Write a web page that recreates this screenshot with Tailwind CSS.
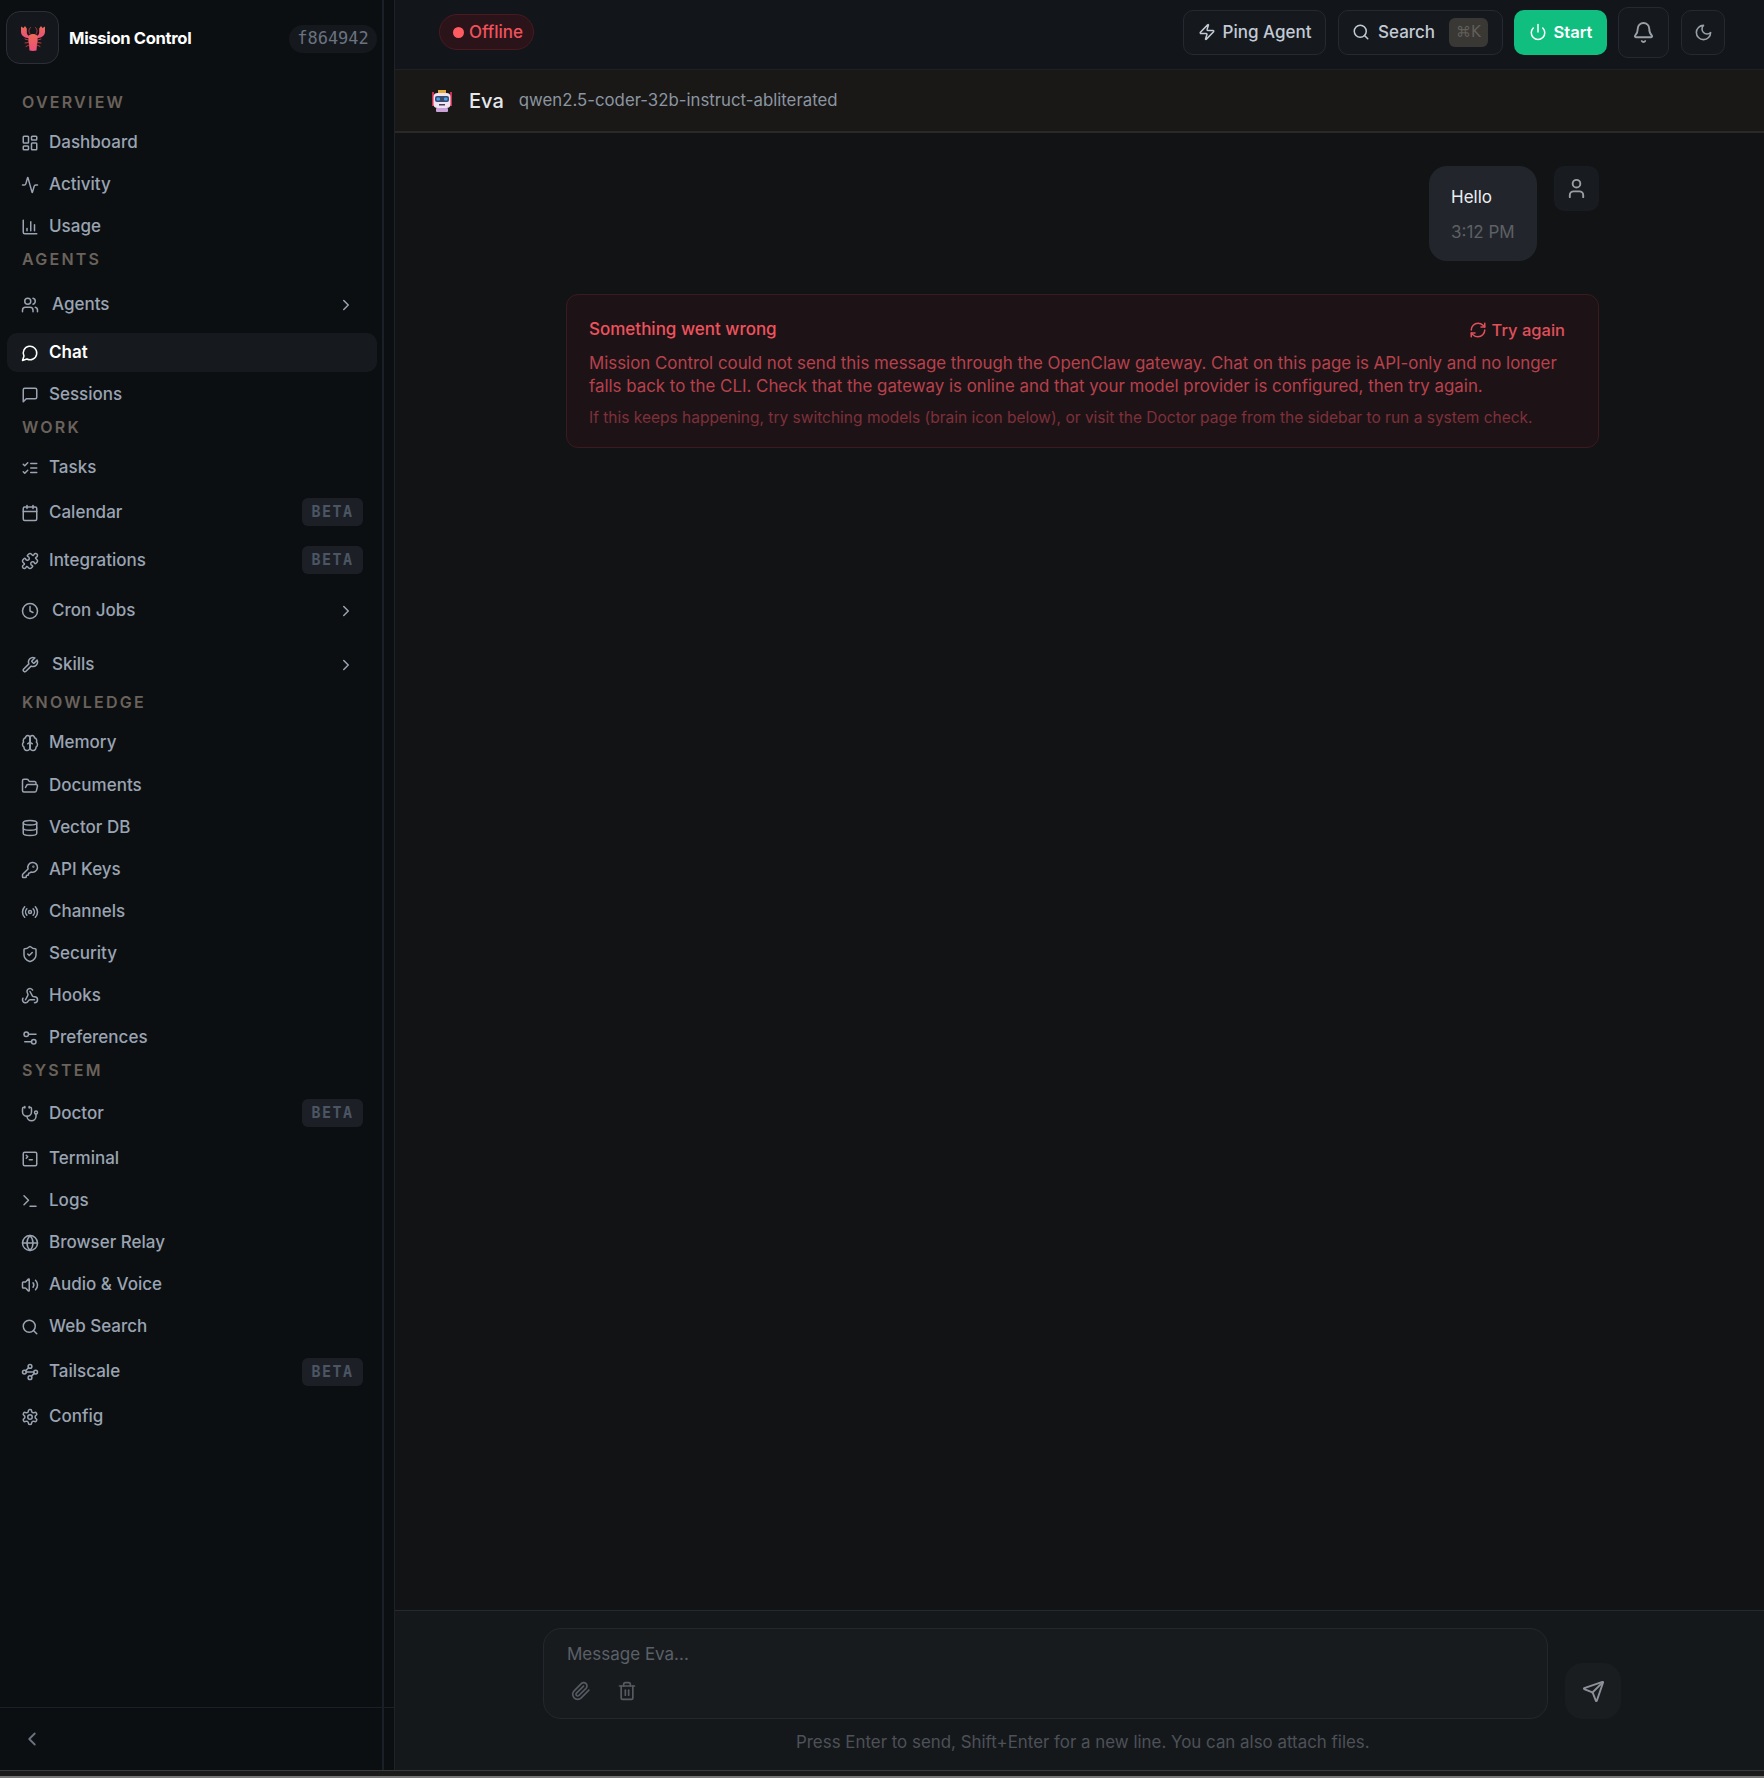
<!doctype html>
<html lang="en">
<head>
<meta charset="utf-8">
<title>Mission Control</title>
<script src="https://cdn.jsdelivr.net/npm/@tailwindcss/browser@4"></script>
</head>
<body class="bg-[#1a1a1a] font-['Inter',sans-serif] overflow-hidden">
<svg class="hidden" xmlns="http://www.w3.org/2000/svg">
<symbol id="dash" viewBox="0 0 24 24"><rect width="7" height="9" x="3" y="3" rx="1"/><rect width="7" height="5" x="14" y="3" rx="1"/><rect width="7" height="9" x="14" y="12" rx="1"/><rect width="7" height="5" x="3" y="16" rx="1"/></symbol>
<symbol id="activity" viewBox="0 0 24 24"><path d="M22 12h-2.48a2 2 0 0 0-1.93 1.46l-2.35 8.36a.25.25 0 0 1-.48 0L9.24 2.18a.25.25 0 0 0-.48 0l-2.35 8.36A2 2 0 0 1 4.49 12H2"/></symbol>
<symbol id="chart" viewBox="0 0 24 24"><path d="M3 3v16a2 2 0 0 0 2 2h16"/><path d="M18 17V9"/><path d="M13 17V5"/><path d="M8 17v-3"/></symbol>
<symbol id="users" viewBox="0 0 24 24"><path d="M16 21v-2a4 4 0 0 0-4-4H6a4 4 0 0 0-4 4v2"/><circle cx="9" cy="7" r="4"/><path d="M22 21v-2a4 4 0 0 0-3-3.87"/><path d="M16 3.13a4 4 0 0 1 0 7.75"/></symbol>
<symbol id="circlemsg" viewBox="0 0 24 24"><path d="M7.9 20A9 9 0 1 0 4 16.1L2 22Z"/></symbol>
<symbol id="squaremsg" viewBox="0 0 24 24"><path d="M21 15a2 2 0 0 1-2 2H7l-4 4V5a2 2 0 0 1 2-2h14a2 2 0 0 1 2 2z"/></symbol>
<symbol id="tasks" viewBox="0 0 24 24"><path d="m3 17 2 2 4-4"/><path d="m3 7 2 2 4-4"/><path d="M13 6h8"/><path d="M13 12h8"/><path d="M13 18h8"/></symbol>
<symbol id="calendar" viewBox="0 0 24 24"><path d="M8 2v4"/><path d="M16 2v4"/><rect width="18" height="18" x="3" y="4" rx="2"/><path d="M3 10h18"/></symbol>
<symbol id="puzzle" viewBox="0 0 24 24"><path d="M19.439 7.85c-.049.322.059.648.289.878l1.568 1.568c.47.47.706 1.087.706 1.704s-.235 1.233-.706 1.704l-1.611 1.611a.98.98 0 0 1-.837.276c-.47-.07-.802-.48-.968-.925a2.501 2.501 0 1 0-3.214 3.214c.446.166.855.497.925.968a.979.979 0 0 1-.276.837l-1.61 1.61a2.404 2.404 0 0 1-1.705.707 2.402 2.402 0 0 1-1.704-.706l-1.568-1.568a1.026 1.026 0 0 0-.877-.29c-.493.074-.84.504-1.02.968a2.5 2.5 0 1 1-3.237-3.237c.464-.18.894-.527.967-1.02a1.026 1.026 0 0 0-.289-.877l-1.568-1.568A2.402 2.402 0 0 1 1.998 12c0-.617.236-1.234.706-1.704L4.23 8.77c.24-.24.581-.353.917-.303.515.077.877.528 1.073 1.01a2.5 2.5 0 1 0 3.259-3.259c-.482-.196-.933-.558-1.01-1.073-.05-.336.062-.676.303-.917l1.525-1.525A2.402 2.402 0 0 1 12 1.998c.617 0 1.234.236 1.704.706l1.568 1.568c.23.23.556.338.877.29.493-.074.84-.504 1.02-.968a2.5 2.5 0 1 1 3.237 3.237c-.464.18-.894.527-.967 1.02Z"/></symbol>
<symbol id="clock" viewBox="0 0 24 24"><circle cx="12" cy="12" r="10"/><polyline points="12 6 12 12 16 14"/></symbol>
<symbol id="wrench" viewBox="0 0 24 24"><path d="M14.7 6.3a1 1 0 0 0 0 1.4l1.6 1.6a1 1 0 0 0 1.4 0l3.77-3.77a6 6 0 0 1-7.94 7.94l-6.91 6.91a2.12 2.12 0 0 1-3-3l6.91-6.91a6 6 0 0 1 7.94-7.94l-3.76 3.76z"/></symbol>
<symbol id="right" viewBox="0 0 24 24"><path d="m9 18 6-6-6-6"/></symbol>
<symbol id="left" viewBox="0 0 24 24"><path d="m15 18-6-6 6-6"/></symbol>
<symbol id="brain" viewBox="0 0 24 24"><path d="M12 5a3 3 0 1 0-5.997.125 4 4 0 0 0-2.526 5.77 4 4 0 0 0 .556 6.588A4 4 0 1 0 12 18Z"/><path d="M12 5a3 3 0 1 1 5.997.125 4 4 0 0 1 2.526 5.77 4 4 0 0 1-.556 6.588A4 4 0 1 1 12 18Z"/><path d="M15 13a4.5 4.5 0 0 1-3-4 4.5 4.5 0 0 1-3 4"/><path d="M12 5v13"/></symbol>
<symbol id="folder" viewBox="0 0 24 24"><path d="m6 14 1.5-2.9A2 2 0 0 1 9.24 10H20a2 2 0 0 1 1.94 2.5l-1.54 6a2 2 0 0 1-1.95 1.5H4a2 2 0 0 1-2-2V5a2 2 0 0 1 2-2h3.9a2 2 0 0 1 1.69.9l.81 1.2a2 2 0 0 0 1.67.9H18a2 2 0 0 1 2 2v2"/></symbol>
<symbol id="db" viewBox="0 0 24 24"><ellipse cx="12" cy="5" rx="9" ry="3"/><path d="M3 5V19A9 3 0 0 0 21 19V5"/><path d="M3 12A9 3 0 0 0 21 12"/></symbol>
<symbol id="key" viewBox="0 0 24 24"><path d="M2.586 17.414A2 2 0 0 0 2 18.828V21a1 1 0 0 0 1 1h3a1 1 0 0 0 1-1v-1a1 1 0 0 1 1-1h1a1 1 0 0 0 1-1v-1a1 1 0 0 1 1-1h.172a2 2 0 0 0 1.414-.586l.814-.814a6.5 6.5 0 1 0-4-4z"/><circle cx="16.5" cy="7.5" r=".5"/></symbol>
<symbol id="radio" viewBox="0 0 24 24"><path d="M4.9 19.1C1 15.2 1 8.8 4.9 4.9"/><path d="M7.8 16.2c-2.3-2.3-2.3-6.1 0-8.5"/><circle cx="12" cy="12" r="2"/><path d="M16.2 7.8c2.3 2.3 2.3 6.1 0 8.5"/><path d="M19.1 4.9C23 8.8 23 15.1 19.1 19"/></symbol>
<symbol id="shield" viewBox="0 0 24 24"><path d="M20 13c0 5-3.5 7.5-7.66 8.95a1 1 0 0 1-.67-.01C7.5 20.5 4 18 4 13V6a1 1 0 0 1 1-1c2 0 4.5-1.2 6.24-2.72a1.17 1.17 0 0 1 1.52 0C14.51 3.81 17 5 19 5a1 1 0 0 1 1 1z"/><path d="m9 12 2 2 4-4"/></symbol>
<symbol id="webhook" viewBox="0 0 24 24"><path d="M18 16.98h-5.99c-1.1 0-1.95.94-2.48 1.9A4 4 0 0 1 2 17c.01-.7.2-1.4.57-2"/><path d="m6 17 3.13-5.78c.53-.97.1-2.18-.5-3.1a4 4 0 1 1 6.89-4.06"/><path d="m12 6 3.13 5.73C15.66 12.7 16.9 13 18 13a4 4 0 0 1 0 8"/></symbol>
<symbol id="prefs" viewBox="0 0 24 24"><path d="M20 7h-9"/><path d="M14 17H5"/><circle cx="17" cy="17" r="3"/><circle cx="7" cy="7" r="3"/></symbol>
<symbol id="steth" viewBox="0 0 24 24"><path d="M11 2v2"/><path d="M5 2v2"/><path d="M5 3H4a2 2 0 0 0-2 2v4a6 6 0 0 0 12 0V5a2 2 0 0 0-2-2h-1"/><path d="M8 15a6 6 0 0 0 12 0v-3"/><circle cx="20" cy="10" r="2"/></symbol>
<symbol id="squareterm" viewBox="0 0 24 24"><path d="m7 11 2-2-2-2"/><path d="M11 13h4"/><rect width="18" height="18" x="3" y="3" rx="2"/></symbol>
<symbol id="term" viewBox="0 0 24 24"><polyline points="4 17 10 11 4 5"/><line x1="12" x2="20" y1="19" y2="19"/></symbol>
<symbol id="globe" viewBox="0 0 24 24"><circle cx="12" cy="12" r="10"/><path d="M12 2a14.5 14.5 0 0 0 0 20 14.5 14.5 0 0 0 0-20"/><path d="M2 12h20"/></symbol>
<symbol id="volume" viewBox="0 0 24 24"><path d="M11 4.702a.705.705 0 0 0-1.203-.498L6.413 7.587A1.4 1.4 0 0 1 5.416 8H3a1 1 0 0 0-1 1v6a1 1 0 0 0 1 1h2.416a1.4 1.4 0 0 1 .997.413l3.383 3.384A.705.705 0 0 0 11 19.298z"/><path d="M16 9a5 5 0 0 1 0 6"/><path d="M19.364 18.364a9 9 0 0 0 0-12.728"/></symbol>
<symbol id="search" viewBox="0 0 24 24"><path d="m21 21-4.34-4.34"/><circle cx="11" cy="11" r="8"/></symbol>
<symbol id="waypoints" viewBox="0 0 24 24"><circle cx="12" cy="4.5" r="2.5"/><path d="m10.2 6.3-3.9 3.9"/><circle cx="4.5" cy="12" r="2.5"/><path d="M7 12h10"/><circle cx="19.5" cy="12" r="2.5"/><path d="m13.8 17.7 3.9-3.9"/><circle cx="12" cy="19.5" r="2.5"/></symbol>
<symbol id="settings" viewBox="0 0 24 24"><path d="M12.22 2h-.44a2 2 0 0 0-2 2v.18a2 2 0 0 1-1 1.73l-.43.25a2 2 0 0 1-2 0l-.15-.08a2 2 0 0 0-2.73.73l-.22.38a2 2 0 0 0 .73 2.73l.15.1a2 2 0 0 1 1 1.72v.51a2 2 0 0 1-1 1.74l-.15.09a2 2 0 0 0-.73 2.73l.22.38a2 2 0 0 0 2.73.73l.15-.08a2 2 0 0 1 2 0l.43.25a2 2 0 0 1 1 1.73V20a2 2 0 0 0 2 2h.44a2 2 0 0 0 2-2v-.18a2 2 0 0 1 1-1.73l.43-.25a2 2 0 0 1 2 0l.15.08a2 2 0 0 0 2.73-.73l.22-.39a2 2 0 0 0-.73-2.73l-.15-.08a2 2 0 0 1-1-1.74v-.5a2 2 0 0 1 1-1.74l.15-.09a2 2 0 0 0 .73-2.73l-.22-.38a2 2 0 0 0-2.73-.73l-.15.08a2 2 0 0 1-2 0l-.43-.25a2 2 0 0 1-1-1.73V4a2 2 0 0 0-2-2z"/><circle cx="12" cy="12" r="3"/></symbol>
<symbol id="zap" viewBox="0 0 24 24"><path d="M4 14a1 1 0 0 1-.78-1.63l9.9-10.2a.5.5 0 0 1 .86.46l-1.92 6.02A1 1 0 0 0 13 10h7a1 1 0 0 1 .78 1.63l-9.9 10.2a.5.5 0 0 1-.86-.46l1.92-6.02A1 1 0 0 0 11 14z"/></symbol>
<symbol id="power" viewBox="0 0 24 24"><path d="M12 2v10"/><path d="M18.4 6.6a9 9 0 1 1-12.77.04"/></symbol>
<symbol id="bell" viewBox="0 0 24 24"><path d="M10.268 21a2 2 0 0 0 3.464 0"/><path d="M3.262 15.326A1 1 0 0 0 4 17h16a1 1 0 0 0 .74-1.673C19.41 13.956 18 12.499 18 8A6 6 0 0 0 6 8c0 4.499-1.411 5.956-2.738 7.326"/></symbol>
<symbol id="moon" viewBox="0 0 24 24"><path d="M12 3a6 6 0 0 0 9 9 9 9 0 1 1-9-9Z"/></symbol>
<symbol id="user" viewBox="0 0 24 24"><path d="M19 21v-2a4 4 0 0 0-4-4H9a4 4 0 0 0-4 4v2"/><circle cx="12" cy="7" r="4"/></symbol>
<symbol id="refresh" viewBox="0 0 24 24"><path d="M3 12a9 9 0 0 1 9-9 9.75 9.75 0 0 1 6.74 2.74L21 8"/><path d="M21 3v5h-5"/><path d="M21 12a9 9 0 0 1-9 9 9.75 9.75 0 0 1-6.74-2.74L3 16"/><path d="M8 16H3v5"/></symbol>
<symbol id="clip" viewBox="0 0 24 24"><path d="m21.44 11.05-9.19 9.19a6 6 0 0 1-8.49-8.49l8.57-8.57A4 4 0 1 1 18 8.84l-8.59 8.57a2 2 0 0 1-2.83-2.83l8.49-8.48"/></symbol>
<symbol id="trash" viewBox="0 0 24 24"><path d="M3 6h18"/><path d="M19 6v14c0 1-1 2-2 2H7c-1 0-2-1-2-2V6"/><path d="M8 6V4c0-1 1-2 2-2h4c1 0 2 1 2 2v2"/><line x1="10" x2="10" y1="11" y2="17"/><line x1="14" x2="14" y1="11" y2="17"/></symbol>
<symbol id="send" viewBox="0 0 24 24"><path d="M14.536 21.686a.5.5 0 0 0 .937-.024l6.5-19a.496.496 0 0 0-.635-.635l-19 6.5a.5.5 0 0 0-.024.937l7.93 3.18a2 2 0 0 1 1.112 1.11z"/><path d="m21.854 2.147-10.94 10.939"/></symbol>
</svg>

<div class="flex h-[1770px] border-b border-[#3a3a3a] box-content">
  <!-- Sidebar -->
  <aside class="relative w-[394px] shrink-0 flex flex-col bg-[#0c0f12] text-[17px] font-medium text-[#9aa4b2]">
    <div class="absolute top-0 bottom-0 left-[382px] w-[2px] bg-[#1a2027]"></div>
    <div class="flex items-center h-[75px] w-[382px] pl-[6px] pr-[5px] shrink-0">
      <div class="w-[53px] h-[53px] rounded-[14px] border border-[#2b3038] bg-[#14171b] flex items-center justify-center shrink-0">
        <svg class="w-[26px] h-[26px]" viewBox="0 0 26 26"><defs><linearGradient id="lob" x1="0" y1="0" x2="0" y2="1"><stop offset="0" stop-color="#ec6a55"/><stop offset="1" stop-color="#ec4f7c"/></linearGradient></defs>
          <path fill="url(#lob)" d="M1 1.500 3.500 3 5 1l1.800 2.500V7.500C6.800 9.500 8 10.500 9.500 11L9 13C5 13 1.300 11 1 7z"/>
          <path fill="url(#lob)" d="M25 1.500 22.500 3 21 1l-1.800 2.500V7.500C19.200 9.500 18 10.500 16.500 11L17 13C21 13 24.700 11 25 7z"/>
          <path fill="url(#lob)" d="M9 10.500C10.500 8.500 15.500 8.500 17 10.500 18 13 18 16.500 17 19.500L16.500 25.500C14.500 26 11.500 26 9.500 25.500L9 19.500C8 16.500 8 13 9 10.500z"/>
          <path fill="none" stroke="#b83a3f" stroke-width="1" stroke-linecap="round" d="M10 9C8.500 7 8.500 4 10.500 2.500M16 9C17.500 7 17.500 4 15.500 2.500M8.500 15 5 14M8.500 17.500 5 18M9 20 6 21.500M17.500 15 21 14M17.500 17.500 21 18M17 20 20 21.500"/></svg>
      </div>
      <span class="ml-[10px] translate-y-px font-bold text-[16.6px] tracking-[-0.02em] text-white">Mission Control</span>
      <span class="ml-auto h-[28px] w-[88px] translate-y-px flex items-center justify-center rounded-full bg-[#15191d] font-['DejaVu_Sans_Mono',monospace] font-normal text-[17px] text-[#6b7280]">f864942</span>
    </div>
    <nav class="flex-1 w-[382px]">
      <div class="flex items-center h-[26px] mt-[15px] mb-[5px] pl-[22px] pb-[2px] text-[16px] font-semibold tracking-[0.14em] text-[#6a625b]">OVERVIEW</div>
      <a class="flex items-center h-[42px] pt-[2px] pl-[21px]"><svg class="w-[18px] h-[18px] mr-[10px] shrink-0" fill="none" stroke="currentColor" stroke-width="2" stroke-linecap="round" stroke-linejoin="round"><use href="#dash"/></svg>Dashboard</a>
      <a class="flex items-center h-[42px] pt-[2px] pl-[21px]"><svg class="w-[18px] h-[18px] mr-[10px] shrink-0" fill="none" stroke="currentColor" stroke-width="2" stroke-linecap="round" stroke-linejoin="round"><use href="#activity"/></svg>Activity</a>
      <a class="flex items-center h-[42px] pt-[2px] pl-[21px]"><svg class="w-[18px] h-[18px] mr-[10px] shrink-0" fill="none" stroke="currentColor" stroke-width="2" stroke-linecap="round" stroke-linejoin="round"><use href="#chart"/></svg>Usage</a>
      <div class="flex items-center h-[26px] mb-[7px] pl-[22px] pb-[2px] text-[16px] font-semibold tracking-[0.14em] text-[#6a625b]">AGENTS</div>
      <a class="flex items-center h-[48px] pt-[2px] pl-[21px] pr-[27px] mb-[5px]"><svg class="w-[18px] h-[18px] mr-[13px] shrink-0" fill="none" stroke="currentColor" stroke-width="2" stroke-linecap="round" stroke-linejoin="round"><use href="#users"/></svg>Agents<svg class="w-[18px] h-[18px] ml-auto" fill="none" stroke="currentColor" stroke-width="2" stroke-linecap="round" stroke-linejoin="round"><use href="#right"/></svg></a>
      <a class="flex items-center h-[39px] ml-[7px] mr-[5px] pl-[14px] rounded-[10px] bg-[#16191d] text-white font-semibold mb-[1px]"><svg class="w-[18px] h-[18px] mr-[10px] shrink-0" fill="none" stroke="currentColor" stroke-width="2" stroke-linecap="round" stroke-linejoin="round"><use href="#circlemsg"/></svg>Chat</a>
      <a class="flex items-center h-[42px] pt-[2px] pl-[21px]"><svg class="w-[18px] h-[18px] mr-[10px] shrink-0" fill="none" stroke="currentColor" stroke-width="2" stroke-linecap="round" stroke-linejoin="round"><use href="#squaremsg"/></svg>Sessions</a>
      <div class="flex items-center h-[26px] mb-[5px] pl-[22px] pb-[2px] text-[16px] font-semibold tracking-[0.14em] text-[#6a625b]">WORK</div>
      <a class="flex items-center h-[42px] pt-[2px] pl-[21px]"><svg class="w-[18px] h-[18px] mr-[10px] shrink-0" fill="none" stroke="currentColor" stroke-width="2" stroke-linecap="round" stroke-linejoin="round"><use href="#tasks"/></svg>Tasks</a>
      <a class="flex items-center h-[48px] pt-[2px] pl-[21px] pr-[19px]"><svg class="w-[18px] h-[18px] mr-[10px] shrink-0" fill="none" stroke="currentColor" stroke-width="2" stroke-linecap="round" stroke-linejoin="round"><use href="#calendar"/></svg>Calendar<span class="ml-auto -translate-y-px w-[61px] h-[28px] flex items-center justify-center rounded-[6px] bg-[#1c2026] font-['DejaVu_Sans_Mono',monospace] font-bold text-[15px] tracking-[0.1em] text-[#4b5563]">BETA</span></a>
      <a class="flex items-center h-[48px] pt-[2px] pl-[21px] pr-[19px]"><svg class="w-[18px] h-[18px] mr-[10px] shrink-0" fill="none" stroke="currentColor" stroke-width="2" stroke-linecap="round" stroke-linejoin="round"><use href="#puzzle"/></svg>Integrations<span class="ml-auto -translate-y-px w-[61px] h-[28px] flex items-center justify-center rounded-[6px] bg-[#1c2026] font-['DejaVu_Sans_Mono',monospace] font-bold text-[15px] tracking-[0.1em] text-[#4b5563]">BETA</span></a>
      <a class="flex items-center h-[52px] pt-[2px] pl-[21px] pr-[27px] mb-[2px]"><svg class="w-[18px] h-[18px] mr-[13px] shrink-0" fill="none" stroke="currentColor" stroke-width="2" stroke-linecap="round" stroke-linejoin="round"><use href="#clock"/></svg>Cron Jobs<svg class="w-[18px] h-[18px] ml-auto" fill="none" stroke="currentColor" stroke-width="2" stroke-linecap="round" stroke-linejoin="round"><use href="#right"/></svg></a>
      <a class="flex items-center h-[52px] pt-[2px] pl-[21px] pr-[27px]"><svg class="w-[18px] h-[18px] mr-[13px] shrink-0" fill="none" stroke="currentColor" stroke-width="2" stroke-linecap="round" stroke-linejoin="round"><use href="#wrench"/></svg>Skills<svg class="w-[18px] h-[18px] ml-auto" fill="none" stroke="currentColor" stroke-width="2" stroke-linecap="round" stroke-linejoin="round"><use href="#right"/></svg></a>
      <div class="flex items-center h-[26px] mb-[5px] pl-[22px] pb-[2px] text-[16px] font-semibold tracking-[0.14em] text-[#6a625b]">KNOWLEDGE</div>
      <a class="flex items-center h-[43px] pl-[21px]"><svg class="w-[18px] h-[18px] mr-[10px] shrink-0" fill="none" stroke="currentColor" stroke-width="2" stroke-linecap="round" stroke-linejoin="round"><use href="#brain"/></svg>Memory</a>
      <a class="flex items-center h-[42px] pt-[2px] pl-[21px]"><svg class="w-[18px] h-[18px] mr-[10px] shrink-0" fill="none" stroke="currentColor" stroke-width="2" stroke-linecap="round" stroke-linejoin="round"><use href="#folder"/></svg>Documents</a>
      <a class="flex items-center h-[42px] pt-[2px] pl-[21px]"><svg class="w-[18px] h-[18px] mr-[10px] shrink-0" fill="none" stroke="currentColor" stroke-width="2" stroke-linecap="round" stroke-linejoin="round"><use href="#db"/></svg>Vector DB</a>
      <a class="flex items-center h-[42px] pt-[2px] pl-[21px]"><svg class="w-[18px] h-[18px] mr-[10px] shrink-0" fill="none" stroke="currentColor" stroke-width="2" stroke-linecap="round" stroke-linejoin="round"><use href="#key"/></svg>API Keys</a>
      <a class="flex items-center h-[42px] pt-[2px] pl-[21px]"><svg class="w-[18px] h-[18px] mr-[10px] shrink-0" fill="none" stroke="currentColor" stroke-width="2" stroke-linecap="round" stroke-linejoin="round"><use href="#radio"/></svg>Channels</a>
      <a class="flex items-center h-[42px] pt-[2px] pl-[21px]"><svg class="w-[18px] h-[18px] mr-[10px] shrink-0" fill="none" stroke="currentColor" stroke-width="2" stroke-linecap="round" stroke-linejoin="round"><use href="#shield"/></svg>Security</a>
      <a class="flex items-center h-[42px] pt-[2px] pl-[21px]"><svg class="w-[18px] h-[18px] mr-[10px] shrink-0" fill="none" stroke="currentColor" stroke-width="2" stroke-linecap="round" stroke-linejoin="round"><use href="#webhook"/></svg>Hooks</a>
      <a class="flex items-center h-[42px] pt-[2px] pl-[21px]"><svg class="w-[18px] h-[18px] mr-[10px] shrink-0" fill="none" stroke="currentColor" stroke-width="2" stroke-linecap="round" stroke-linejoin="round"><use href="#prefs"/></svg>Preferences</a>
      <div class="flex items-center h-[26px] mb-[5px] pl-[22px] pb-[2px] text-[16px] font-semibold tracking-[0.14em] text-[#6a625b]">SYSTEM</div>
      <a class="flex items-center h-[48px] pt-[2px] pl-[21px] pr-[19px]"><svg class="w-[18px] h-[18px] mr-[10px] shrink-0" fill="none" stroke="currentColor" stroke-width="2" stroke-linecap="round" stroke-linejoin="round"><use href="#steth"/></svg>Doctor<span class="ml-auto -translate-y-px w-[61px] h-[28px] flex items-center justify-center rounded-[6px] bg-[#1c2026] font-['DejaVu_Sans_Mono',monospace] font-bold text-[15px] tracking-[0.1em] text-[#4b5563]">BETA</span></a>
      <a class="flex items-center h-[42px] pt-[2px] pl-[21px]"><svg class="w-[18px] h-[18px] mr-[10px] shrink-0" fill="none" stroke="currentColor" stroke-width="2" stroke-linecap="round" stroke-linejoin="round"><use href="#squareterm"/></svg>Terminal</a>
      <a class="flex items-center h-[42px] pt-[2px] pl-[21px]"><svg class="w-[18px] h-[18px] mr-[10px] shrink-0" fill="none" stroke="currentColor" stroke-width="2" stroke-linecap="round" stroke-linejoin="round"><use href="#term"/></svg>Logs</a>
      <a class="flex items-center h-[42px] pt-[2px] pl-[21px]"><svg class="w-[18px] h-[18px] mr-[10px] shrink-0" fill="none" stroke="currentColor" stroke-width="2" stroke-linecap="round" stroke-linejoin="round"><use href="#globe"/></svg>Browser Relay</a>
      <a class="flex items-center h-[42px] pt-[2px] pl-[21px]"><svg class="w-[18px] h-[18px] mr-[10px] shrink-0" fill="none" stroke="currentColor" stroke-width="2" stroke-linecap="round" stroke-linejoin="round"><use href="#volume"/></svg>Audio &amp; Voice</a>
      <a class="flex items-center h-[42px] pt-[2px] pl-[21px]"><svg class="w-[18px] h-[18px] mr-[10px] shrink-0" fill="none" stroke="currentColor" stroke-width="2" stroke-linecap="round" stroke-linejoin="round"><use href="#search"/></svg>Web Search</a>
      <a class="flex items-center h-[48px] pt-[2px] pl-[21px] pr-[19px]"><svg class="w-[18px] h-[18px] mr-[10px] shrink-0" fill="none" stroke="currentColor" stroke-width="2" stroke-linecap="round" stroke-linejoin="round"><use href="#waypoints"/></svg>Tailscale<span class="ml-auto w-[61px] h-[28px] flex items-center justify-center rounded-[6px] bg-[#1c2026] font-['DejaVu_Sans_Mono',monospace] font-bold text-[15px] tracking-[0.1em] text-[#4b5563]">BETA</span></a>
      <a class="flex items-center h-[42px] pt-[2px] pl-[21px]"><svg class="w-[18px] h-[18px] mr-[10px] shrink-0" fill="none" stroke="currentColor" stroke-width="2" stroke-linecap="round" stroke-linejoin="round"><use href="#settings"/></svg>Config</a>
    </nav>
    <div class="h-[63px] border-t border-[#1a2027] flex items-center pl-[21px] text-[#6b7280] shrink-0">
      <svg class="w-[22px] h-[22px]" fill="none" stroke="currentColor" stroke-width="2" stroke-linecap="round" stroke-linejoin="round"><use href="#left"/></svg>
    </div>
  </aside>

  <!-- Main -->
  <main class="flex-1 min-w-0 flex flex-col border-l border-[#1e2329] bg-[#111315]">
    <header class="h-[70px] shrink-0 flex items-center pl-[44px] pr-[39px] pb-[5px] border-b border-[#1e2227] bg-[#12151a] font-medium text-[17px]">
      <span class="h-[36px] w-[95px] pl-[13px] flex items-center gap-[5px] rounded-full border border-[#4a1a20] bg-[#2a1419] text-[#f0525c]"><span class="w-[11px] h-[11px] rounded-full bg-[#ff5c62]"></span><span class="translate-y-px">Offline</span></span>
      <div class="ml-auto flex items-center gap-[11px] text-[#c3cad6]">
        <button class="h-[45px] w-[143px] flex items-center justify-center gap-[7px] rounded-[10px] border border-[#252a31] bg-[#15191d]"><svg class="w-[18px] h-[18px]" fill="none" stroke="currentColor" stroke-width="2" stroke-linecap="round" stroke-linejoin="round"><use href="#zap"/></svg><span class="translate-y-px">Ping Agent</span></button>
        <button class="ml-px h-[45px] w-[165px] flex items-center pl-[13px] rounded-[10px] border border-[#252a31] bg-[#15191d]"><svg class="w-[18px] h-[18px] mr-[8px]" fill="none" stroke="currentColor" stroke-width="2" stroke-linecap="round" stroke-linejoin="round"><use href="#search"/></svg><span class="translate-y-px">Search</span><span class="ml-auto mr-[14px] w-[39px] h-[29px] flex items-center justify-center rounded-[6px] bg-[#3a3835] text-[#625e59] text-[15px] font-['DejaVu_Sans',sans-serif] font-normal">⌘K</span></button>
        <button class="h-[45px] w-[93px] flex items-center justify-center gap-[7px] rounded-[10px] bg-[#10bf80] text-white font-semibold text-[16.5px]"><svg class="w-[18px] h-[18px]" fill="none" stroke="currentColor" stroke-width="2" stroke-linecap="round" stroke-linejoin="round"><use href="#power"/></svg>Start</button>
        <button class="h-[51px] w-[51px] flex items-center justify-center rounded-[10px] border border-[#252a31] bg-[#15191d] text-[#9aa0a8]"><svg class="w-[23px] h-[23px]" fill="none" stroke="currentColor" stroke-width="2" stroke-linecap="round" stroke-linejoin="round"><use href="#bell"/></svg></button>
        <button class="ml-px h-[45px] w-[44px] flex items-center justify-center rounded-[10px] border border-[#252a31] bg-[#15191d] text-[#9aa0a8]"><svg class="w-[19px] h-[19px]" fill="none" stroke="currentColor" stroke-width="2" stroke-linecap="round" stroke-linejoin="round"><use href="#moon"/></svg></button>
      </div>
    </header>

    <div class="h-[63px] shrink-0 flex items-center pl-[36px] border-b-2 border-[#2a2927] bg-[#1a1816]">
      <svg class="w-[22px] h-[22px] shrink-0" viewBox="0 0 22 22">
        <path fill="#c9304f" d="M1 2h2v14H1zM19 2h2v14h-2z"/>
        <path fill="#e0a93f" d="M7 0h8v3H7z"/>
        <rect x="2.500" y="3" width="17" height="15" rx="4" fill="#efe3f2"/>
        <rect x="4" y="6" width="14" height="6" rx="2" fill="#3a4a6e"/>
        <rect x="5.500" y="7.500" width="3.500" height="3" rx="1" fill="#4aa3e8"/><rect x="13" y="7.500" width="3.500" height="3" rx="1" fill="#4aa3e8"/>
        <rect x="8" y="14" width="6" height="1.500" fill="#4a3a5a"/>
        <rect x="5" y="18" width="12" height="4" rx="1" fill="#c9a3d8"/>
      </svg>
      <span class="ml-[16px] text-[20px] font-medium text-[#e5e7eb]">Eva</span>
      <span class="ml-[15px] text-[16.8px] text-[#8b95a1]">qwen2.5-coder-32b-instruct-abliterated</span>
    </div>

    <section class="flex-1 min-h-0 pt-[33px] pl-[171px] pr-[165px]">
      <div class="flex justify-end items-start gap-[17px]">
        <div class="w-[108px] h-[95px] rounded-[18px] bg-[#22262c] pl-[22px] pt-[19px] text-[17px]">
          <div class="text-[#eceef1] leading-[25px]">Hello</div>
          <div class="mt-[10px] text-[#5d6064] leading-[25px]">3:12 PM</div>
        </div>
        <div class="w-[45px] h-[45px] rounded-[10px] bg-[#181b1f] flex items-center justify-center text-[#9b9fa5]"><svg class="w-[23px] h-[23px]" fill="none" stroke="currentColor" stroke-width="2" stroke-linecap="round" stroke-linejoin="round"><use href="#user"/></svg></div>
      </div>
      <div class="mt-[33px] h-[154px] rounded-[12px] border border-[#3c1a1f] bg-[#1d1317] pl-[22px] pr-[33px] pt-[22px]">
        <div class="flex items-center justify-between h-[26px] text-[17px] font-medium text-[#f0525c]">
          <span>Something went wrong</span>
          <span class="flex items-center gap-[5px] text-[16.5px] text-[#e0505a]"><svg class="w-[18px] h-[18px]" fill="none" stroke="currentColor" stroke-width="2" stroke-linecap="round" stroke-linejoin="round"><use href="#refresh"/></svg>Try again</span>
        </div>
        <p class="mt-[9px] text-[16.86px] leading-[23px] text-[#b8414c]">Mission Control could not send this message through the OpenClaw gateway. Chat on this page is API-only and no longer falls back to the CLI. Check that the gateway is online and that your model provider is configured, then try again.</p>
        <p class="mt-[8px] text-[15.5px] leading-[23px] text-[#7f3039]">If this keeps happening, try switching models (brain icon below), or visit the Doctor page from the sidebar to run a system check.</p>
      </div>
    </section>

    <footer class="h-[160px] shrink-0 border-t border-[#26292d] bg-[#15181b] pl-[148px]">
      <div class="flex items-end mt-[17px] gap-[17px]">
        <div class="w-[1005px] h-[91px] rounded-[18px] border border-[#24282d] bg-[#181b1e] pl-[23px] pt-[13px]">
          <div class="text-[17px] leading-[25px] text-[#5b6068]">Message Eva...</div>
          <div class="flex items-center gap-[26px] mt-[14px] pl-[4px] text-[#565b62]">
            <svg class="w-[20px] h-[20px]" fill="none" stroke="currentColor" stroke-width="2" stroke-linecap="round" stroke-linejoin="round"><use href="#clip"/></svg>
            <svg class="w-[20px] h-[20px]" fill="none" stroke="currentColor" stroke-width="2" stroke-linecap="round" stroke-linejoin="round"><use href="#trash"/></svg>
          </div>
        </div>
        <button class="w-[56px] h-[56px] rounded-[18px] bg-[#1a1d20] flex items-center justify-center text-[#8d929a]"><svg class="w-[23px] h-[23px]" fill="none" stroke="currentColor" stroke-width="2" stroke-linecap="round" stroke-linejoin="round"><use href="#send"/></svg></button>
      </div>
      <div class="mt-[11px] pl-[253px] text-[16.9px] leading-[24px] text-[#4d5158]">Press Enter to send, Shift+Enter for a new line. You can also attach files.</div>
    </footer>
  </main>
</div>
<div class="h-[5px] bg-[#1a1a1a]"></div>
<div class="h-[2px] bg-[#777777]"></div>
</body>
</html>
